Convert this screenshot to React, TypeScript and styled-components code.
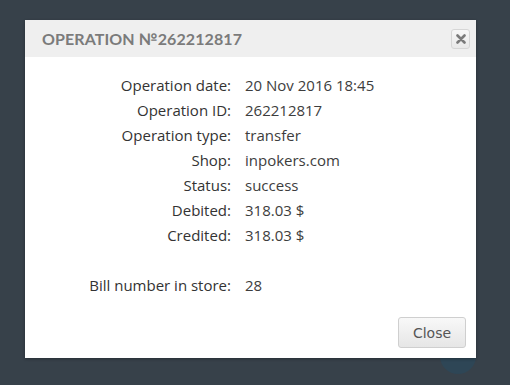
import styled, { createGlobalStyle } from "styled-components";

const Global = createGlobalStyle`
  html, body {
    margin: 0;
    padding: 0;
    background: #37414a;
  }
  body {
    width: 510px;
    height: 385px;
    overflow: hidden;
  }
`;

const Backdrop = styled.div`
  position: relative;
  width: 510px;
  height: 385px;
  padding: 20px 0 0 25px;
  box-sizing: border-box;
  background: #37414a;
`;

const Bubble = styled.div`
  position: absolute;
  left: 440px;
  top: 338px;
  width: 36px;
  height: 36px;
  border-radius: 50%;
  background: #2e4656;
`;

const Modal = styled.div`
  position: relative;
  width: 451px;
  height: 338px;
  background: #fff;
  display: flex;
  flex-direction: column;
  box-shadow: 0 1px 3px rgba(0, 0, 0, 0.3);
`;

const Header = styled.div`
  height: 37px;
  background: #efefef;
  display: flex;
  align-items: center;
  justify-content: space-between;
  padding: 0 6px 0 17px;
`;

const Title = styled.h3`
  margin: 0;
  font-family: "Lato", "Open Sans", sans-serif;
  font-weight: 700;
  font-size: 16px;
  letter-spacing: 0.1px;
  color: #7b7b7b;
`;

const CloseX = styled.button`
  width: 19px;
  height: 20px;
  padding: 0;
  border: 1px solid #d6d6d6;
  border-radius: 3px;
  background: linear-gradient(#f7f7f7, #e9e9e9);
  display: flex;
  align-items: center;
  justify-content: center;
`;

const Body = styled.div`
  flex: 1;
  padding-top: 16px;
  display: grid;
  grid-template-columns: 206px 1fr;
  column-gap: 14px;
  grid-auto-rows: 24.9px;
  align-content: start;
  align-items: center;
  font-family: "Open Sans", "Lato", sans-serif;
  font-size: 15px;
  color: #3d3d3d;
`;

const Label = styled.div`
  text-align: right;
  font-weight: 500;
  color: #333;
`;

const Value = styled.div``;

const Spacer = styled.div`
  grid-column: 1 / 3;
`;

const Footer = styled.div`
  display: flex;
  justify-content: flex-end;
  padding: 0 10px 10px 0;
`;

const Button = styled.button`
  width: 68px;
  height: 31px;
  border: 1px solid #cfcfcf;
  border-radius: 3px;
  background: linear-gradient(#f8f8f8, #e6e6e6);
  font-family: "DejaVu Sans", Verdana, sans-serif;
  font-size: 14px;
  color: #555;
  padding: 0;
`;

const rows: [string, string][] = [
  ["Operation date:", "20 Nov 2016 18:45"],
  ["Operation ID:", "262212817"],
  ["Operation type:", "transfer"],
  ["Shop:", "inpokers.com"],
  ["Status:", "success"],
  ["Debited:", "318.03 $"],
  ["Credited:", "318.03 $"],
];

export default function App() {
  return (
    <>
      <Global />
      <Backdrop>
        <Bubble />
        <Modal>
          <Header>
            <Title>OPERATION №262212817</Title>
            <CloseX aria-label="close">
              <svg width="10" height="10" viewBox="0 0 10 10">
                <path d="M1.5 1.5 L8.5 8.5 M8.5 1.5 L1.5 8.5" stroke="#7a7a7a" strokeWidth="2.6" strokeLinecap="round" />
              </svg>
            </CloseX>
          </Header>
          <Body>
            {rows.flatMap(([l, v]) => [
              <Label key={l}>{l}</Label>,
              <Value key={l + "v"}>{v}</Value>,
            ])}
            <Spacer />
            <Label>Bill number in store:</Label>
            <Value>28</Value>
          </Body>
          <Footer>
            <Button>Close</Button>
          </Footer>
        </Modal>
      </Backdrop>
    </>
  );
}
